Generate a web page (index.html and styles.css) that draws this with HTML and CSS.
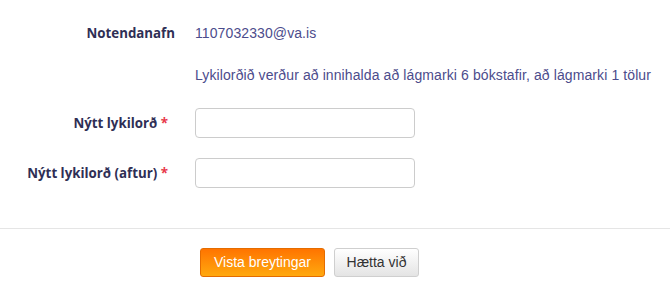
FILE: index.html
```html
<!DOCTYPE html>
<html lang="is">
<head>
<meta charset="utf-8">
<title>Breyta lykilorði</title>
<link rel="stylesheet" href="styles.css">
</head>
<body>
<form class="form">
  <div class="fields">
    <div class="row row-user">
      <div class="label">Notendanafn</div>
      <div class="value">1107032330@va.is</div>
    </div>
    <div class="row row-hint">
      <div class="label"></div>
      <div class="value">Lykilorðið verður að innihalda að lágmarki 6 bókstafir, að lágmarki 1 tölur</div>
    </div>
    <div class="row row-input">
      <label class="label req" for="pw1">Nýtt lykilorð <span class="star">*</span></label>
      <div class="value"><input id="pw1" class="input" type="password"></div>
    </div>
    <div class="row row-input row-last">
      <label class="label req" for="pw2">Nýtt lykilorð (aftur) <span class="star">*</span></label>
      <div class="value"><input id="pw2" class="input" type="password"></div>
    </div>
  </div>
  <div class="actions">
    <button type="button" class="btn btn-primary">Vista breytingar</button>
    <button type="button" class="btn btn-default">Hætta við</button>
  </div>
</form>
</body>
</html>
```
FILE: styles.css
```css
html, body {
  margin: 0;
  padding: 0;
  background: #ffffff;
}
body {
  font-family: "Liberation Sans", Arial, sans-serif;
  font-size: 14px;
}
.fields {
  padding-top: 23px;
  padding-bottom: 40px;
  border-bottom: 1px solid #e5e5e5;
}
.row {
  display: grid;
  grid-template-columns: 175px 1fr;
  column-gap: 20px;
  align-items: center;
}
.label {
  text-align: right;
  font-family: "Open Sans", "DejaVu Sans", sans-serif;
  font-weight: bold;
  font-size: 13.3px;
  color: #2f2f55;
  line-height: 20px;
}
.label.req {
  padding-right: 7px;
}
.star {
  color: #e8394a;
}
.value {
  color: #4c4c8c;
  line-height: 20px;
  letter-spacing: 0.1px;
}
.row-user {
  height: 20px;
}
.row-hint {
  margin-top: 22px;
  height: 20px;
}
.row-input {
  margin-top: 23px;
  height: 30px;
}
.row-last {
  margin-top: 20px;
}
.input {
  display: block;
  box-sizing: border-box;
  width: 220px;
  height: 30px;
  margin: 0;
  padding: 4px 8px;
  border: 1px solid #cccccc;
  border-radius: 4px;
  background: #ffffff;
  font-family: "Liberation Sans", Arial, sans-serif;
  font-size: 14px;
}
.actions {
  display: flex;
  gap: 9px;
  padding: 19px 0 0 200px;
}
.btn {
  box-sizing: border-box;
  height: 29px;
  margin: 0;
  padding: 0 11px;
  border-radius: 3px;
  font-family: "Liberation Sans", Arial, sans-serif;
  font-size: 14px;
  line-height: 27px;
  cursor: pointer;
}
.btn-primary {
  width: 125px;
  color: #ffffff;
  border: 1px solid #e46c00;
  background: linear-gradient(to bottom, #ff7400 0%, #ffa90f 100%);
}
.btn-default {
  width: 85px;
  color: #333333;
  border: 1px solid #cfcfcf;
  background: linear-gradient(to bottom, #ffffff 0%, #e4e4e4 100%);
}
```
